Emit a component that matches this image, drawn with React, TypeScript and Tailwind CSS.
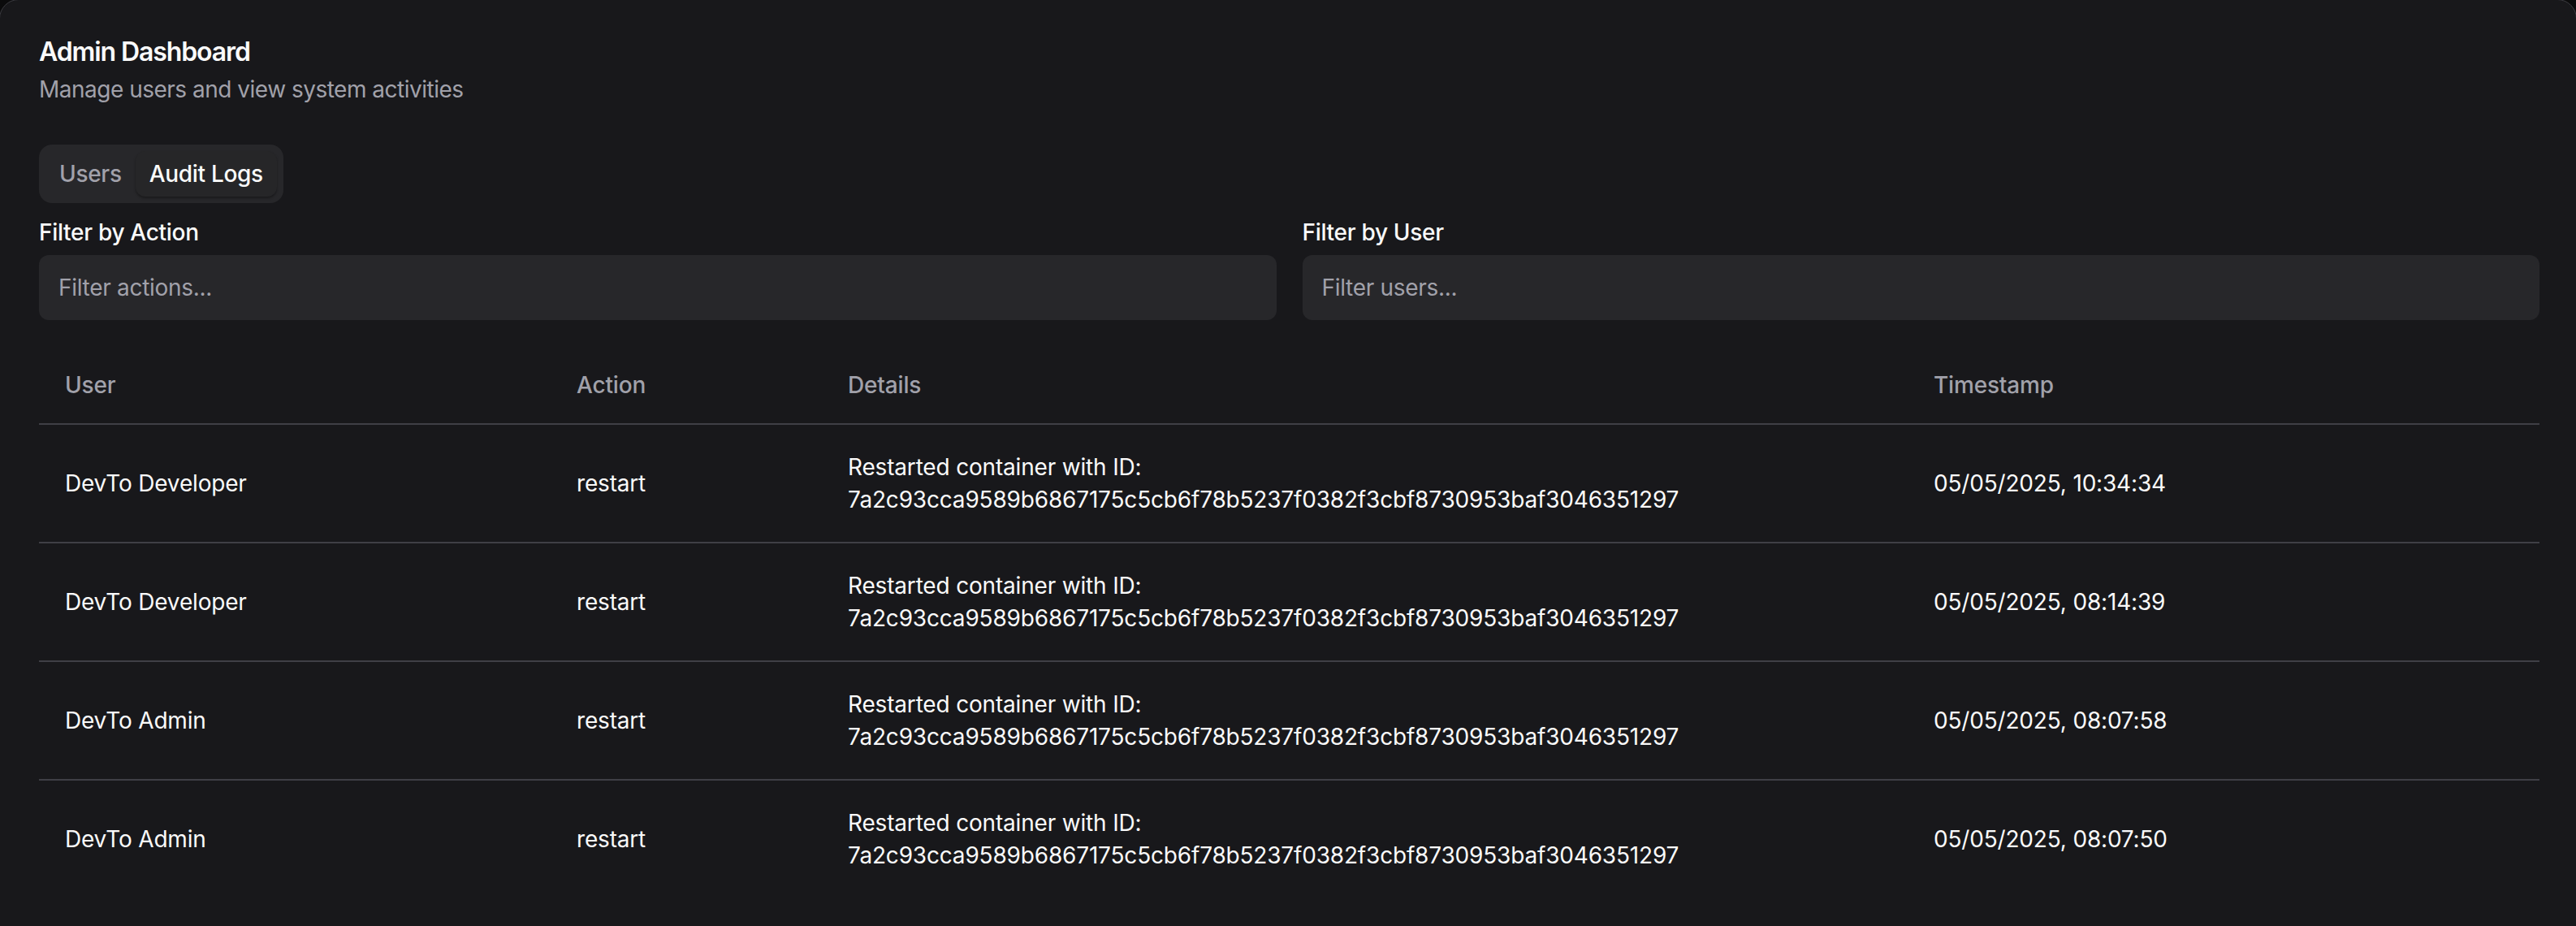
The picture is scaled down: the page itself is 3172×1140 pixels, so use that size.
import React from "react";

const rows = [
  { user: "DevTo Developer", action: "restart", ts: "05/05/2025, 10:34:34" },
  { user: "DevTo Developer", action: "restart", ts: "05/05/2025, 08:14:39" },
  { user: "DevTo Admin", action: "restart", ts: "05/05/2025, 08:07:58" },
  { user: "DevTo Admin", action: "restart", ts: "05/05/2025, 08:07:50" },
];

const ID = "7a2c93cca9589b6867175c5cb6f78b5237f0382f3cbf8730953baf3046351297";

export default function App() {
  return (
    <div className="min-h-screen overflow-hidden bg-[#0b0b0c] font-['Inter','Noto_Sans',sans-serif] antialiased">
      <div className="-ml-px -mr-px -mt-px h-[1180px] overflow-hidden rounded-[24px] border border-[#3a3a3f] bg-[#18181b] pl-[48px] pr-[45px] pt-[48px] tracking-[-0.3px] text-[#fafafa]">
        <div className="pb-[48px]">
          <h1 className="text-[32px] font-semibold leading-none tracking-[-1.1px] text-[#fafafa]">
            Admin Dashboard
          </h1>
          <p className="mt-[10px] text-[28px] leading-[40px] tracking-[-0.5px] text-[#a1a1aa]">
            Manage users and view system activities
          </p>
        </div>

        <div className="inline-flex h-[72px] items-center rounded-[16px] bg-[#27272a] p-[8px] text-[28px] font-medium">
          <div className="flex h-[56px] items-center rounded-[12px] px-[17px] text-[#a1a1aa]">Users</div>
          <div className="flex h-[56px] items-center rounded-[12px] bg-[#262628] px-[17px] text-[#fafafa] shadow-[0_2px_3px_rgba(0,0,0,0.35)]">
            Audit Logs
          </div>
        </div>

        <div className="mt-[16px] grid grid-cols-2 gap-[32px]">
          <div>
            <div className="text-[28px] font-medium leading-[40px] text-[#fafafa]">Filter by Action</div>
            <div className="mt-[8px] flex h-[80px] items-center rounded-[12px] bg-[#27272a] px-[24px] text-[28px] text-[#a1a1aa]">
              Filter actions...
            </div>
          </div>
          <div>
            <div className="text-[28px] font-medium leading-[40px] text-[#fafafa]">Filter by User</div>
            <div className="mt-[8px] flex h-[80px] items-center rounded-[12px] bg-[#27272a] px-[24px] text-[28px] text-[#a1a1aa]">
              Filter users...
            </div>
          </div>
        </div>

        <table className="mt-[32px] w-full table-fixed border-collapse text-left text-[28px] leading-[40px] tracking-[-0.18px]">
          <colgroup>
            <col className="w-[630px]" />
            <col className="w-[334px]" />
            <col className="w-[1337px]" />
            <col />
          </colgroup>
          <thead>
            <tr className="border-b-2 border-[#3f3f46]">
              <th className="h-[96px] px-[32px] align-middle font-medium text-[#a1a1aa]">User</th>
              <th className="h-[96px] px-[32px] align-middle font-medium text-[#a1a1aa]">Action</th>
              <th className="h-[96px] px-[32px] align-middle font-medium text-[#a1a1aa]">Details</th>
              <th className="h-[96px] px-[32px] align-middle font-medium text-[#a1a1aa]">Timestamp</th>
            </tr>
          </thead>
          <tbody>
            {rows.map((r, i) => (
              <tr key={i} className={i < rows.length - 1 ? "border-b-2 border-[#3f3f46]" : ""}>
                <td className="p-[32px] align-middle">{r.user}</td>
                <td className="p-[32px] align-middle">{r.action}</td>
                <td className="p-[32px] align-middle">
                  Restarted container with ID:
                  <br />
                  {ID}
                </td>
                <td className="p-[32px] align-middle">{r.ts}</td>
              </tr>
            ))}
          </tbody>
        </table>
      </div>
    </div>
  );
}
